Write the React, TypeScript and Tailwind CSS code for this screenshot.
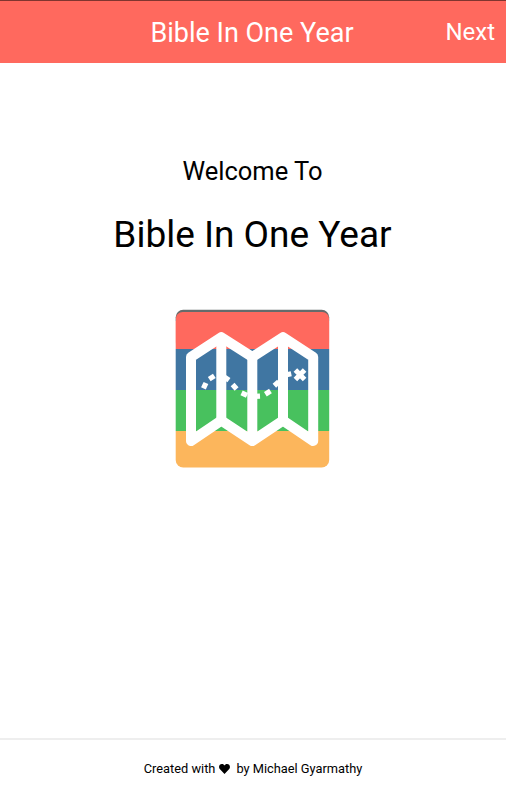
import React from 'react';

// x, y, angle of every dash on the route
const dashes = [
  [204.7, 385.7, -65],
  [211.8, 377.5, -32],
  [226.5, 378.5, 35],
  [234.6, 386.7, 48],
  [244.3, 394.2, 25],
  [257, 396.2, -3],
  [267.9, 392.6, -32],
  [276.6, 383.7, -42],
  [288.3, 374.3, -12],
];

const MapLogo: React.FC = () => (
  <svg width="154" height="158" viewBox="176 310 154 158" className="block overflow-visible">
    <defs>
      <clipPath id="tile">
        <rect x="175.7" y="309.7" width="153.5" height="157.8" rx="7.5" />
      </clipPath>
    </defs>
    <g clipPath="url(#tile)">
      <rect x="175" y="309" width="155" height="12" fill="#656b6b" />
      <rect x="175.7" y="312" width="153.5" height="37" rx="7" fill="#ff695e" />
      <rect x="175" y="321" width="155" height="28" fill="#ff695e" />
      <rect x="175" y="349" width="155" height="41" fill="#4076a2" />
      <rect x="175" y="390" width="155" height="41" fill="#48c15e" />
      <rect x="175" y="431" width="155" height="37" fill="#fcb65c" />
    </g>
    {/* folded map */}
    <g fill="none" stroke="#fff" strokeWidth="10" strokeLinejoin="round">
      <path d="M191 357 L221.3 337.2 L252.3 357 L283 337.2 L313.2 357 V441 L283 420.5 L252.3 441 L221.3 420.5 L191 441 Z" />
      <path d="M221.3 337.2 V420.5 M252.3 357 V441 M283 337.2 V420.5" />
    </g>
    {/* route */}
    <g fill="#fff">
      {dashes.map(([x, y, angle]) => (
        <rect key={x} x={x - 3} y={y - 2.6} width="6" height="5.2" transform={`rotate(${angle} ${x} ${y})`} />
      ))}
    </g>
    <path d="M295.4 370 L304.6 379.4 M304.6 370 L295.4 379.4" stroke="#fff" strokeWidth="5" />
  </svg>
);

const App: React.FC = () => {
  return (
    <div className="flex flex-col h-screen bg-white text-black font-[Roboto,sans-serif]">
      <header className="grid grid-cols-[1fr_auto_1fr] items-center h-[63px] shrink-0 bg-[#ff695e] border-t border-[#80352f] text-white">
        <span />
        <h1 className="pr-[2px] pt-px text-[27px] leading-8 whitespace-nowrap">Bible In One Year</h1>
        <button className="justify-self-end pr-[11px] text-2xl leading-8">Next</button>
      </header>

      <main className="flex flex-col items-center flex-1 pt-[90px]">
        <p className="pr-px text-[25.5px] leading-9">Welcome To</p>
        <h2 className="mt-6 pr-px text-[37px] leading-11">Bible In One Year</h2>
        <div className="mt-[53px]">
          <MapLogo />
        </div>
      </main>

      <footer className="flex items-center justify-center h-[62px] shrink-0 border-t-2 border-[#eeeeee] pb-0.5 text-[12.8px]">
        <span>Created with</span>
        <svg width="11" height="10" viewBox="0 0 11 10" className="ml-1 mr-1.5">
          <path d="M5.5 10 L1 5.3 C-1 3 .4 0 2.9 0 C4.2 0 5.1.7 5.5 1.6 C5.9.7 6.8 0 8.1 0 C10.6 0 12 3 10 5.3 Z" />
        </svg>
        <span>by Michael Gyarmathy</span>
      </footer>
    </div>
  );
};

export default App;
